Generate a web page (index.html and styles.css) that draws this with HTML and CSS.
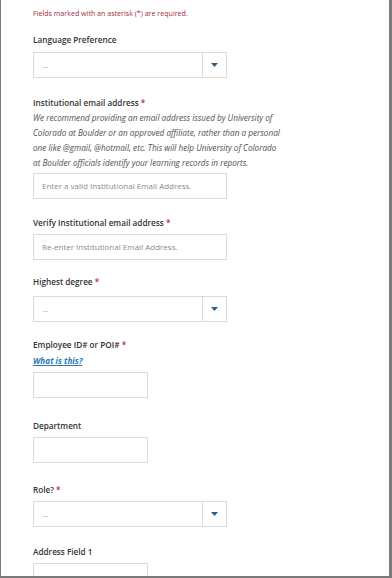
FILE: index.html
```html
<!DOCTYPE html>
<html>
<head>
<meta charset="utf-8">
<link rel="stylesheet" href="styles.css">
</head>
<body>
<div class="page">
  <p class="note">Fields marked with an asterisk (*) are required.</p>

  <div class="field mb18">
    <label class="label lb5">Language Preference</label>
    <div class="select"><span class="value">...</span><span class="arrow"><svg width="7" height="4" viewBox="0 0 7 4"><path d="M0 0H7L3.5 4Z" fill="#2a5f88"/></svg></span></div>
  </div>

  <div class="field mb17">
    <label class="label">Institutional email address <span class="req">*</span></label>
    <p class="help">We recommend providing an email address issued by University of Colorado at Boulder or an approved affiliate, rather than a personal one like @gmail, @hotmail, etc. This will help University of Colorado at Boulder officials identify your learning records in reports.</p>
    <div class="input wide">Enter a valid Institutional Email Address.</div>
  </div>

  <div class="field mb15">
    <label class="label">Verify Institutional email address <span class="req">*</span></label>
    <div class="input wide">Re-enter Institutional Email Address.</div>
  </div>

  <div class="field mb16">
    <label class="label lb7">Highest degree <span class="req">*</span></label>
    <div class="select"><span class="value">...</span><span class="arrow"><svg width="7" height="4" viewBox="0 0 7 4"><path d="M0 0H7L3.5 4Z" fill="#2a5f88"/></svg></span></div>
  </div>

  <div class="field mb21">
    <label class="label">Employee ID# or POI# <span class="req">*</span></label>
    <a class="link">What is this?</a>
    <div class="input short"></div>
  </div>

  <div class="field mb20">
    <label class="label">Department</label>
    <div class="input short"></div>
  </div>

  <div class="field mb18">
    <label class="label">Role? <span class="req">*</span></label>
    <div class="select"><span class="value">...</span><span class="arrow"><svg width="7" height="4" viewBox="0 0 7 4"><path d="M0 0H7L3.5 4Z" fill="#2a5f88"/></svg></span></div>
  </div>

  <div class="field">
    <label class="label">Address Field 1</label>
    <div class="input short"></div>
  </div>
</div>
</body>
</html>
```

FILE: styles.css
```css
html, body {
  margin: 0;
  padding: 0;
  background: #ffffff;
}
body {
  font-family: "Open Sans", "Noto Sans", sans-serif;
  color: #333333;
}
.page {
  box-sizing: border-box;
  width: 392px;
  height: 578px;
  overflow: hidden;
  border-left: 1px solid #7a7a7a;
  border-right: 3px solid #7a7a7a;
  border-bottom: 2px solid #7a7a7a;
  padding: 7px 0 0 32px;
  background: #fff;
}
.note {
  margin: 0 0 14px 0;
  font-size: 7.1px;
  line-height: 12px;
  color: #a12c3c;
}
.field {
  margin-bottom: 18px;
}
.mb15 { margin-bottom: 15px; }
.mb16 { margin-bottom: 16px; }
.mb17 { margin-bottom: 17px; }
.mb18 { margin-bottom: 18px; }
.mb20 { margin-bottom: 20px; }
.mb21 { margin-bottom: 21px; }
.label {
  display: block;
  font-size: 8.2px;
  line-height: 14px;
  font-weight: 600;
  color: #333;
  margin-bottom: 4px;
}
.lb5 { margin-bottom: 5px; }
.lb7 { margin-bottom: 7px; }
.req {
  color: #b22a3a;
}
.help {
  margin: -4px 0 3px 0;
  width: 249px;
  font-size: 8.2px;
  line-height: 15px;
  font-style: italic;
  color: #505050;
}
.link {
  display: block;
  margin: -2px 0 4px 0;
  font-size: 8.2px;
  line-height: 14px;
  font-style: italic;
  font-weight: 700;
  color: #2b7bb5;
  text-decoration: underline;
}
.select {
  box-sizing: border-box;
  width: 194px;
  height: 26px;
  border: 1px solid #dcdcdc;
  display: flex;
  align-items: stretch;
}
.select .value {
  flex: 1;
  padding-left: 9px;
  font-size: 7px;
  line-height: 26px;
  color: #888;
}
.select .arrow {
  width: 23px;
  border-left: 1px solid #dcdcdc;
  display: flex;
  align-items: center;
  justify-content: center;
}
.input {
  box-sizing: border-box;
  height: 26px;
  border: 1px solid #dcdcdc;
  padding-left: 8px;
  font-size: 8px;
  line-height: 24px;
  color: #8a8a8a;
}
.input.wide {
  width: 194px;
}
.input.short {
  width: 115px;
}
```
